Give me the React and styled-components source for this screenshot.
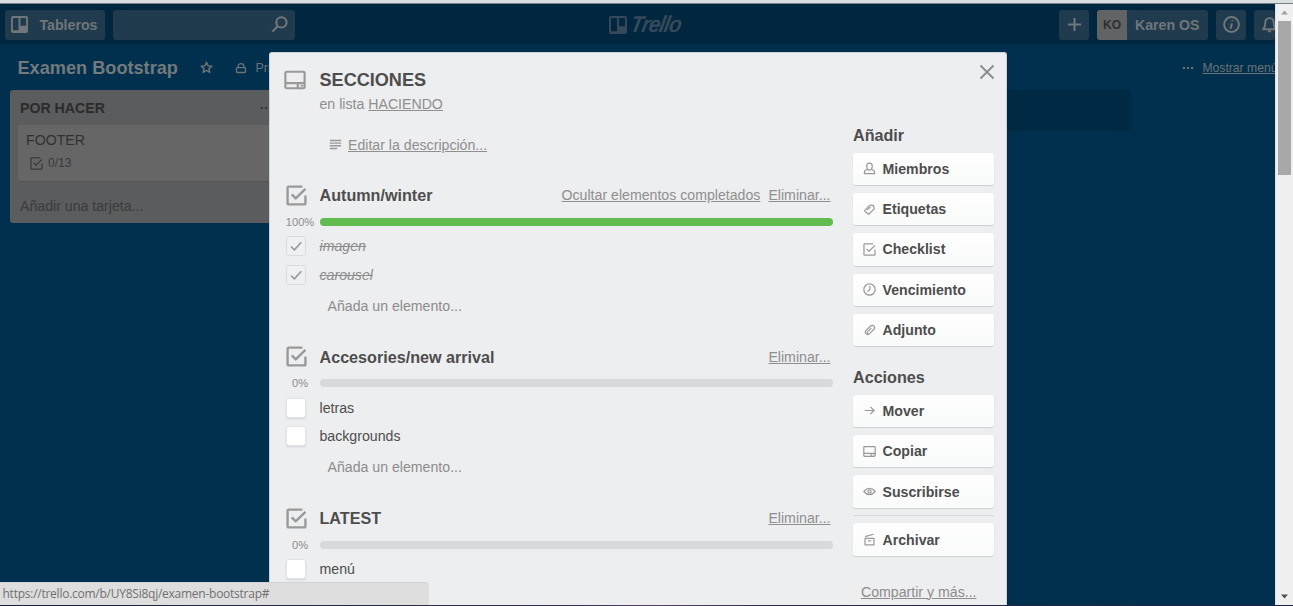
import React from 'react';
import styled, { createGlobalStyle, css } from 'styled-components';

const Global = createGlobalStyle`
  * { box-sizing: border-box; }
  body { margin: 0; overflow: hidden; font-family: "Liberation Sans", Arial, sans-serif; font-size: 14.15px; color: #4d4d4d; }
`;

const Page = styled.div`
  position: relative; display: flex; flex-direction: column;
  width: 1293px; height: 606px; overflow: hidden; background: #00304d;
`;
const BrowserEdge = styled.div`
  flex: none; height: 4px; background: #dcdddd; border-bottom: 1px solid #74828b;
`;
const Viewport = styled.div`display: flex; flex: 1; min-height: 0;`;
const TaskEdge = styled.div`flex: none; height: 1px; background: linear-gradient(90deg, #14203c, #35304d 45%, #58446a 50%, #2c2a48 60%, #1a2342);`;
const Board = styled.div`position: relative; width: 1275px; overflow: hidden; color: #6b7276;`;

const TopBar = styled.header`
  display: flex; align-items: center; height: 40px; padding: 1px 0 0 5px;
  background: #00273f; color: #707679;
`;
const BarButton = styled.div`
  display: flex; align-items: center; flex: none; height: 30px; width: ${p => p.$w}px;
  margin-right: ${p => p.$gap ?? 8}px; padding-left: ${p => p.$pad ?? 0}px;
  background: #203b4e; border-radius: 3px; font-weight: bold; white-space: nowrap; overflow: hidden;
`;
const ButtonLabel = styled.span`margin-left: ${p => p.$left}px;`;
const Logo = styled.div`
  display: flex; align-items: center; flex: 1; padding-left: 314px; color: #35495a;
`;
const Script = styled.span`
  font: italic bold 23px/24px "Liberation Sans", Arial, sans-serif;
  letter-spacing: -1px; margin: -2px 0 0 4px;
  transform: scaleX(.89) skewX(-12deg); transform-origin: left center;
`;
const Avatar = styled.div`
  display: flex; align-items: center; justify-content: center; width: 30px; height: 30px;
  background: #626365; color: #2c2e30; font-size: 12px;
`;

const BoardHeader = styled.div`display: flex; align-items: center; height: 46px; padding: 1px 0 0 17.5px; white-space: nowrap;`;
const BoardName = styled.h1`flex: none; margin: 0; width: 181.5px; font-size: 18.17px; line-height: 24px; color: #73797c;`;
const Visibility = styled.span`display: flex; flex: none; align-items: center; gap: 9px; margin-left: 22px; width: 947px; font-size: 12.5px;`;
const MenuLink = styled.a`margin-left: 9px; font-size: 12.15px; text-decoration: underline;`;

const Lists = styled.div`display: flex; align-items: flex-start; gap: 10px; padding-left: 10px;`;
const List = styled.section`
  flex: none; width: 275px; height: 133px; padding: .5px 8px 0;
  background: #5b5c5d; border-radius: 3px; color: #2a2b2c;
`;
const ListHead = styled.div`
  display: flex; align-items: center; justify-content: space-between; height: 34.5px; padding: 0 5px 0 2px; font-weight: bold;
`;
const Card = styled.article`
  height: 56.5px; padding: 5px 8px; background: #666; border-radius: 3px; border-bottom: 1px solid #525354; color: #303132; line-height: 20px;
`;
const Badge = styled.div`display: flex; align-items: center; gap: 5px; margin: 4px 0 0 4px; font-size: 12.1px; line-height: 18px; color: #393a3b;`;
const AddCard = styled.div`padding: 14.5px 2px; line-height: 20px; color: #393b3c;`;
const EmptyList = styled.div`flex: none; width: 273px; height: 41px; margin-left: 563px; background: #002a43; border-radius: 4px;`;

const ScrollTrack = styled.div`
  display: flex; flex-direction: column; align-items: center; width: 18px; background: #f0f0f0; border-left: 1px solid #dfe3e5;
`;
const ScrollArrow = styled.div`display: flex; align-items: center; justify-content: center; height: 17px;`;
const ScrollThumb = styled.div`width: 13px; height: 154px; margin-bottom: auto; background: #a8a8a8;`;

const Modal = styled.div`
  position: absolute; left: 269px; top: 52px; width: 737.5px; height: 553px; overflow: hidden;
  display: flex; background: #edeef0; border-radius: 3px 3px 0 0; border: 1px solid #c9d2d8; border-bottom: 0;
`;
const Main = styled.main`width: 564px; margin-left: 15.5px; padding-top: 11.5px;`;
const Row = styled.div`
  display: grid; grid-template-columns: 34px 1fr auto; align-items: center; height: ${p => p.$h}px; color: #999;
`;
const CardIcon = styled.span`margin-left: -2px;`;
const CardTitle = styled.h2`margin: 0; font-size: 18.1px; line-height: 24px; color: #4d4d4d;`;
const Muted = styled.div`
  height: 20px; line-height: 18.5px; padding-left: 34px; color: #8f8f8f;
`;
const Link = styled.a`color: #8f8f8f; text-decoration: underline; margin-left: ${p => p.$left ?? 0}px;`;
const Description = styled.div`display: flex; align-items: center; height: 20px; margin: 20px 0 23.5px; padding-left: 43.5px; color: #999;`;

const Checklist = styled.section`height: 161.5px;`;
const ChecklistTitle = styled.h3`margin: 0; font-size: 16.15px; line-height: 22px; color: #4d4d4d;`;
const LinkGroup = styled.div`margin-right: 19px;`;
const Progress = styled.div`display: flex; align-items: center; height: 19px;`;
const Percent = styled.span`width: 30px; margin: 0 4px 0 0; padding-right: 1px; text-align: center; font-size: 11.1px; color: #8c8c8c;`;
const Bar = styled.div`width: 513px; height: 8px; border-radius: 4px; background: ${p => (p.$done ? '#61bd4f' : '#d6dadc')};`;
const Items = styled.div`padding-top: 1px;`;
const Item = styled.div`
  display: flex; align-items: center; height: 28.35px;
  ${p => p.$done && css`color: #8c8c8c; font-style: italic; text-decoration: line-through;`}
`;
const Box = styled.span`
  display: flex; align-items: center; justify-content: center; width: 20px; height: 20px; margin: 0 13.5px 0 .5px; border-radius: 3px;
  ${p => p.$done
    ? css`border: 1px solid #d9dcde; background: #eff0f1; color: #999;`
    : css`border: 1px solid #e2e4e6; background: #fff; box-shadow: 0 1px 2px #cfd2d4;`}
`;
const AddItem = styled.div`height: 35px; line-height: 35px; padding-left: 42px; color: #8c8c8c;`;

const Sidebar = styled.aside`width: 141px; margin-left: 3.5px; padding-top: 70.5px;`;
const SideTitle = styled.h3`margin: ${p => p.$top ?? 0}px 0 6px; font-size: 16.15px; line-height: 23px; color: #4d4d4d;`;
const Action = styled.button`
  display: flex; align-items: center; width: 141px; height: 32.4px; margin: 0 0 8px; padding: 0 0 0 10px; border: 0;
  border-radius: 3px; background: linear-gradient(#fff, #f9fafa); box-shadow: 0 1px 1px #cdd0d2, 0 0 1px #dfe2e4;
  font: bold 14.15px "Liberation Sans", Arial, sans-serif; color: #4d4d4d;
  svg { margin-right: 6.5px; color: #999; }
`;
const Divider = styled.hr`height: 1px; border: 0; margin: -1px 0 7.5px; background: #d6dadc;`;
const Share = styled.a`display: block; margin: 26px 0 0 8px; line-height: 20px; color: #8c8c8c; text-decoration: underline;`;
const CloseButton = styled.span`position: absolute; right: 11px; top: 11px; color: #8c8c8c;`;

const Status = styled.div`
  position: absolute; left: 0; top: 582px; width: 429px; height: 23px; padding-left: 2.5px;
  background: #dedede; border-top: 1px solid #d0d3d5; border-radius: 0 4px 0 0;
  font: 12px/21px "Open Sans", "Noto Sans", sans-serif; letter-spacing: -.25px; color: #707070; white-space: nowrap;
`;

const Svg = styled.svg`display: block; flex: none; overflow: visible;`;
const StarIcon = styled.span`flex: none; margin-left: .5px;`;
const shapes = {
  check: <><path d="M12.5 1.2H2Q1.2 1.2 1.2 2V14Q1.2 14.8 2 14.8H14Q14.8 14.8 14.8 14V8" /><path d="M4.4 7.2 7.4 10.2 14.8 2.9" /></>,
  tick: <path d="M2.2 8.6 6.2 12.4 14 3.8" />,
  card: <><rect x="1" y="2" width="14" height="12" rx="1" /><path d="M1 10.3H15M10 10.3V14" /><path d="M12 12.2H14" strokeWidth="1" /></>,
  lines: <path d="M1 3H15M1 6.3H15M1 9.6H15M1 13H10" />,
  member: <path d="M8 1.5C5.3 1.5 4.6 3.3 4.6 5.2 4.6 7 5.5 8 5.5 9L2.2 10.8 1.6 14.2H14.4L13.8 10.8 10.5 9C10.5 8 11.4 7 11.4 5.2 11.4 3.3 10.7 1.5 8 1.5ZM5.5 9Q8 11 10.5 9" />,
  tag: <><path d="M2.4 8.8 8.2 3Q8.8 2.4 9.7 2.5L12.7 3 13.8 6.2Q14 7 13.4 7.6L7.7 13.2Q6.9 14 6.1 13.2L2.5 10.4Q1.7 9.6 2.4 8.8Z" /><path d="M5 8.8 9.5 4.4" /></>,
  clock: <><circle cx="8" cy="8" r="7" /><path d="M8.5 3.5V8L5.5 10.6" /></>,
  clip: <path d="M12.5 7.2 7.8 12.2C5.4 14.5 1.2 11.2 3.5 8L9 2.8C12-.1 16 3.5 13.5 6.5L8.2 11.6C6.3 13.3 4.2 11.2 5.7 9.4L10.2 5.1" strokeWidth="1.4" />,
  arrow: <path d="M2 8H13.5M9 3.5 13.7 8 9 12.5" />,
  eye: <><path d="M1 8Q8 0 15 8Q8 16 1 8Z" /><circle cx="8" cy="8" r="2" /></>,
  archive: <path d="M2.5 6.5H13.5V14.5H2.5ZM6 9.8H10M2.4 4.5 13 1.5" />,
  close: <path d="M1.5 1.5 14.5 14.5M14.5 1.5 1.5 14.5" />,
  search: <><circle cx="9.8" cy="6" r="4.8" /><path d="M6.2 9.6 1.3 14.7" /></>,
  plus: <path d="M8 1V15M1 8H15" />,
  info: <><circle cx="8" cy="8" r="7" /><path d="M8.4 7 7.2 12M8.9 4V4.9" /></>,
  bell: <path d="M2 12.5Q4 10.5 4 6.5C4 3.5 5.5 2 8 2S12 3.5 12 6.5Q12 10.5 14 12.5ZM6.5 14.5H9.5" />,
  star: <path d="M8 1.7 9.9 5.9 14.6 6.3 11 9.4 12.1 14.1 8 11.6 3.9 14.1 5 9.4 1.4 6.3 6.1 5.9Z" />,
  lock: <><rect x="2" y="7.5" width="12" height="6.5" rx="1" /><path d="M4.3 7V5.5C4.3 1 11.7 1 11.7 5.5V7" /></>,
  dots: <path d="M1 8H4M6.5 8H9.5M12 8H15" />,
};
const Icon = ({ name, size = 13, stroke = 1.5 }) => (
  <Svg width={size} height={size} viewBox="0 0 16 16" fill="none" stroke="currentColor" strokeWidth={stroke} strokeLinejoin="round">{shapes[name]}</Svg>
);
const BoardMark = ({ size, hole }) => (
  <Svg width={size} height={size} viewBox="0 0 18 18">
    <rect width="18" height="18" rx="2" fill="currentColor" />
    <rect x="2" y="2" width="6" height="13.2" rx=".7" fill={hole} />
    <rect x="10" y="2" width="6" height="8.2" rx=".7" fill={hole} />
  </Svg>
);
const Triangle = ({ down, color }) => (
  <Svg width="7" height="5" viewBox="0 0 7 5"><path d={down ? 'M0 .5H7L3.5 4.5Z' : 'M0 4.5H7L3.5 .5Z'} fill={color} /></Svg>
);

const checklists = [
  { title: 'Autumn/winter', percent: 100, hide: true, items: ['imagen', 'carousel'], add: true },
  { title: 'Accesories/new arrival', percent: 0, items: ['letras', 'backgrounds'], add: true },
  { title: 'LATEST', percent: 0, items: ['menú'] },
];
const addActions = [['member', 'Miembros'], ['tag', 'Etiquetas'], ['check', 'Checklist'], ['clock', 'Vencimiento'], ['clip', 'Adjunto']];
const cardActions = [['arrow', 'Mover'], ['card', 'Copiar'], ['eye', 'Suscribirse']];
const renderAction = ([icon, label]) => <Action key={label}><Icon name={icon} size={13} stroke={1.5} />{label}</Action>;

export default function App() {
  return (
    <Page>
      <Global />
      <BrowserEdge />
      <Viewport>
        <Board>
          <TopBar>
            <BarButton $w={99.5} $pad={6}><BoardMark size={17} hole="#203b4e" /><ButtonLabel $left={11.5}>Tableros</ButtonLabel></BarButton>
            <BarButton $w={182} $pad={158.5} $gap={0}><Icon name="search" size={17} stroke={2} /></BarButton>
            <Logo><BoardMark size={18} hole="#00273f" /><Script>Trello</Script></Logo>
            <BarButton $w={30} $pad={7.5}><Icon name="plus" size={15} stroke={2.2} /></BarButton>
            <BarButton $w={111}><Avatar>KO</Avatar><ButtonLabel $left={8}>Karen OS</ButtonLabel></BarButton>
            <BarButton $w={30} $pad={6.5}><Icon name="info" size={17} stroke={1.8} /></BarButton>
            <BarButton $w={21} $pad={7} $gap={0}><Icon name="bell" size={17} stroke={1.8} /></BarButton>
          </TopBar>
          <BoardHeader>
            <BoardName>Examen Bootstrap</BoardName>
            <StarIcon><Icon name="star" size={13} stroke={1.8} /></StarIcon>
            <Visibility><Icon name="lock" size={12} stroke={1.8} />Privado</Visibility>
            <Icon name="dots" size={12} stroke={2.5} />
            <MenuLink>Mostrar menú</MenuLink>
          </BoardHeader>
          <Lists>
            <List>
              <ListHead>POR HACER<Icon name="dots" size={12} stroke={2} /></ListHead>
              <Card>FOOTER<Badge><Icon name="check" size={13} />0/13</Badge></Card>
              <AddCard>Añadir una tarjeta...</AddCard>
            </List>
            <EmptyList />
          </Lists>
        </Board>
        <ScrollTrack>
          <ScrollArrow><Triangle color="#a0a0a0" /></ScrollArrow>
          <ScrollThumb />
          <ScrollArrow><Triangle down color="#505050" /></ScrollArrow>
        </ScrollTrack>
      </Viewport>
      <TaskEdge />

      <Modal>
        <Main>
          <Row $h={30}><CardIcon><Icon name="card" size={22} stroke={1.6} /></CardIcon><CardTitle>SECCIONES</CardTitle></Row>
          <Muted>en lista <Link>HACIENDO</Link></Muted>
          <Description><Icon name="lines" size={13} stroke={1.8} /><Link $left={6}>Editar la descripción...</Link></Description>
          {checklists.map(list => (
            <Checklist key={list.title}>
              <Row $h={34}>
                <Icon name="check" size={21} stroke={1.8} />
                <ChecklistTitle>{list.title}</ChecklistTitle>
                <LinkGroup>
                  {list.hide && <Link>Ocultar elementos completados</Link>}
                  <Link $left={8}>Eliminar...</Link>
                </LinkGroup>
              </Row>
              <Progress><Percent>{list.percent}%</Percent><Bar $done={list.percent === 100} /></Progress>
              <Items>
                {list.items.map(item => (
                  <Item key={item} $done={list.percent === 100}>
                    <Box $done={list.percent === 100}>{list.percent === 100 && <Icon name="tick" size={14} stroke={1.8} />}</Box>{item}
                  </Item>
                ))}
              </Items>
              {list.add && <AddItem>Añada un elemento...</AddItem>}
            </Checklist>
          ))}
        </Main>
        <Sidebar>
          <SideTitle>Añadir</SideTitle>
          {addActions.map(renderAction)}
          <SideTitle $top={19.2}>Acciones</SideTitle>
          {cardActions.map(renderAction)}
          <Divider />
          {renderAction(['archive', 'Archivar'])}
          <Share>Compartir y más...</Share>
        </Sidebar>
        <CloseButton><Icon name="close" size={16} stroke={1.8} /></CloseButton>
      </Modal>
      <Status>https://trello.com/b/UY8Si8qj/examen-bootstrap#</Status>
    </Page>
  );
}
